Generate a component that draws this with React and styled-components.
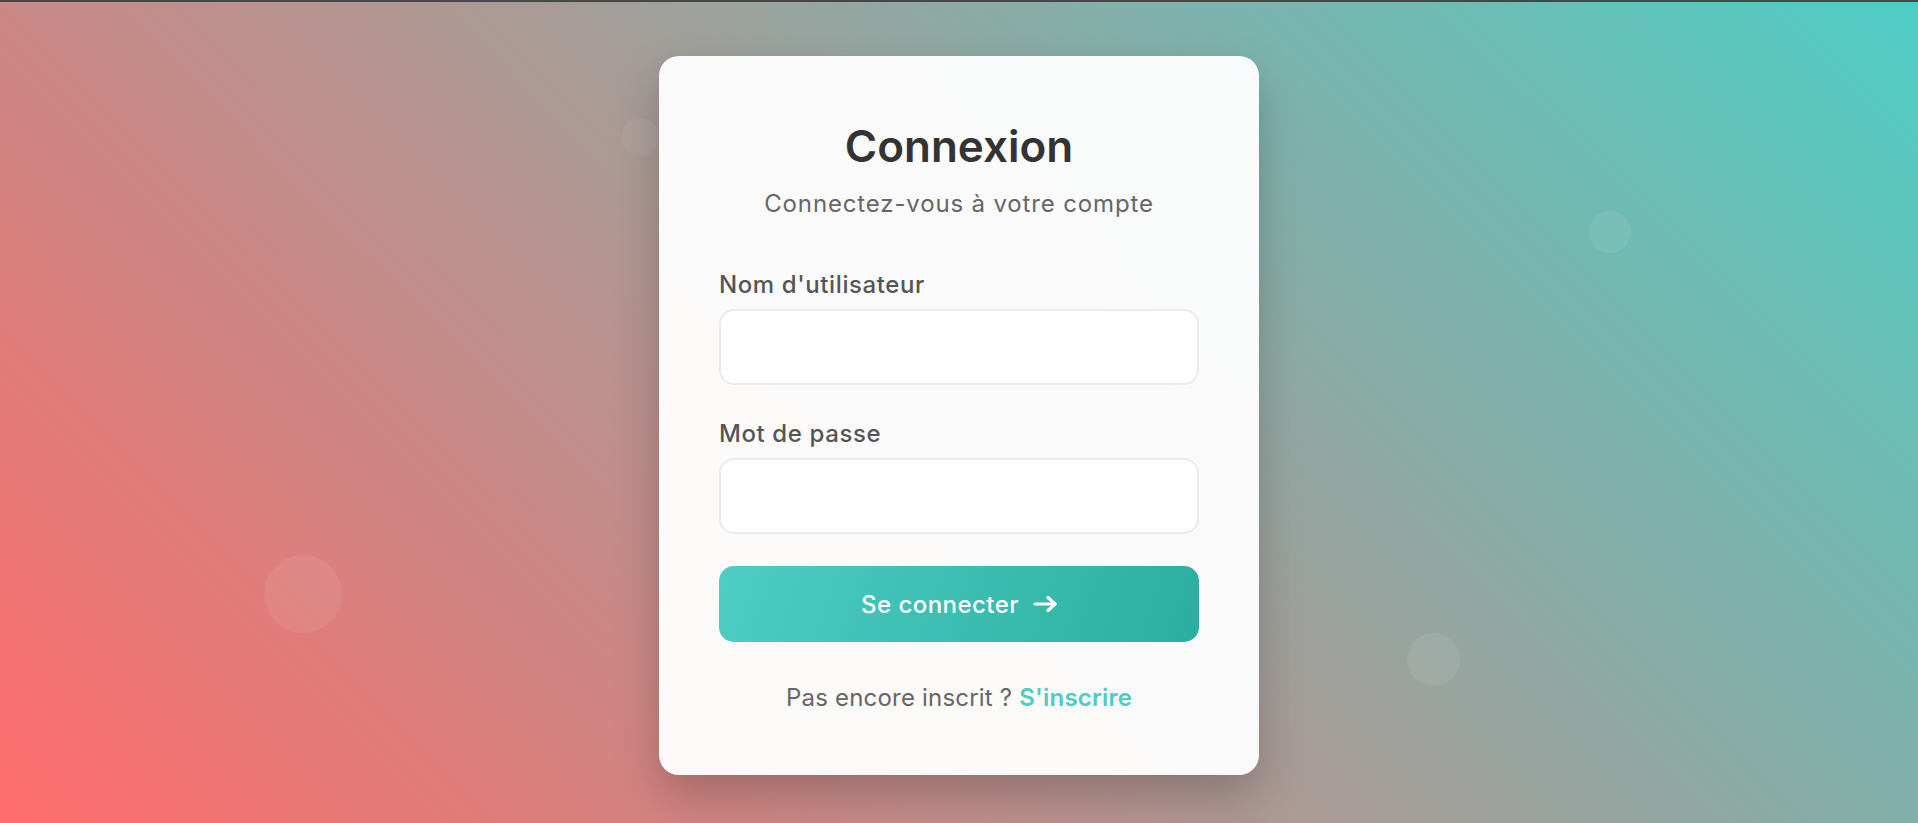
import React from 'react';
import styled, { createGlobalStyle } from 'styled-components';

const GlobalStyle = createGlobalStyle`
  * { box-sizing: border-box; }
  html, body { margin: 0; padding: 0; }
  body {
    border-top: 2px solid #474747;
    font-family: "Inter", "Noto Sans", sans-serif;
    overflow: hidden;
  }
`;

const Page = styled.div`
  position: relative;
  min-height: 821px;
  background: linear-gradient(45deg, #ff6b6b 0%, #4ecdc4 100%);
  display: flex;
  justify-content: center;
  align-items: flex-start;
  padding-top: 54px;
  overflow: hidden;
`;

const Bubble = styled.span`
  position: absolute;
  border-radius: 50%;
  background: rgba(255, 255, 255, ${p => p.alpha || 0.07});
  width: ${p => p.size}px;
  height: ${p => p.size}px;
  left: ${p => p.x - p.size / 2}px;
  top: ${p => p.y - p.size / 2}px;
`;

const Card = styled.div`
  position: relative;
  z-index: 1;
  width: 600px;
  padding: 66px 60px 64px;
  border-radius: 20px;
  background: rgba(255, 255, 255, 0.95);
  box-shadow: 0 20px 45px rgba(0, 0, 0, 0.22);
`;

const Title = styled.h1`
  margin: 0;
  text-align: center;
  font-size: 44px;
  line-height: 48px;
  font-weight: 600;
  color: #333;
`;

const Subtitle = styled.p`
  margin: 19px 0 0;
  text-align: center;
  font-size: 24px;
  line-height: 30px;
  letter-spacing: 0.85px;
  color: #666;
`;

const Form = styled.form`
  display: flex;
  flex-direction: column;
  margin-top: 54px;
`;

const Field = styled.div`
  display: flex;
  flex-direction: column;
  gap: 12px;
  margin-bottom: ${p => p.last ? 32 : 37}px;
`;

const Label = styled.label`
  font-size: 24px;
  line-height: 24px;
  font-weight: 500;
  letter-spacing: 0.6px;
  color: #555;
`;

const Input = styled.input`
  height: 76px;
  width: 100%;
  border: 2px solid #ebebeb;
  border-radius: 15px;
  background: #fff;
  padding: 0 20px;
  font: inherit;
  font-size: 20px;
  outline: none;
`;

const Button = styled.button`
  height: 76px;
  width: 100%;
  border: none;
  border-radius: 15px;
  background: linear-gradient(110deg, #4ecdc4 0%, #2bae9f 100%);
  color: #fff;
  font-family: inherit;
  font-size: 24px;
  font-weight: 500;
  letter-spacing: 0.45px;
  display: flex;
  align-items: center;
  justify-content: center;
  gap: 14px;
  cursor: pointer;
  svg { display: block; }
`;

const Footer = styled.p`
  margin: 43px 0 0;
  text-align: center;
  font-size: 24px;
  line-height: 26px;
  letter-spacing: 0.2px;
  color: #666;
  a {
    color: #4ecdc4;
    font-weight: 600;
    text-decoration: none;
  }
`;

function Arrow() {
  return (
    <svg width="24" height="16" viewBox="0 0 24 16" fill="none" stroke="#fff" strokeWidth="3.2" strokeLinecap="round" strokeLinejoin="round">
      <path d="M2 8h20" />
      <path d="M15 1.5L22 8l-7 6.5" />
    </svg>
  );
}

export default function App() {
  return (
    <>
      <GlobalStyle />
      <Page>
        <Bubble size={78} x={303} y={592} />
        <Bubble size={42} x={1610} y={230} />
        <Bubble size={53} x={1433} y={657} />
        <Bubble size={38} x={640} y={135} alpha={0.05} />
        <Card>
          <Title>Connexion</Title>
          <Subtitle>Connectez-vous à votre compte</Subtitle>
          <Form onSubmit={e => e.preventDefault()}>
            <Field>
              <Label htmlFor="username">Nom d'utilisateur</Label>
              <Input id="username" type="text" />
            </Field>
            <Field last>
              <Label htmlFor="password">Mot de passe</Label>
              <Input id="password" type="password" />
            </Field>
            <Button type="submit">
              Se connecter
              <Arrow />
            </Button>
          </Form>
          <Footer>
            Pas encore inscrit ? <a href="#">S'inscrire</a>
          </Footer>
        </Card>
      </Page>
    </>
  );
}
